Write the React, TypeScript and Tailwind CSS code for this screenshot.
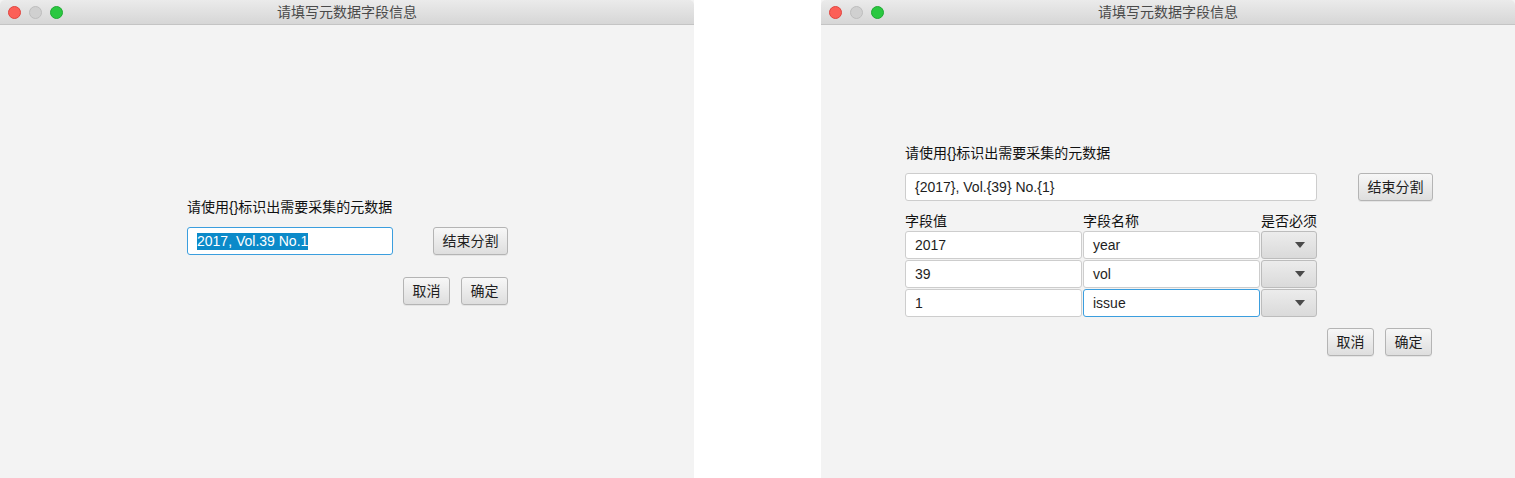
import React from "react";

const FONT = { fontFamily: '"Liberation Sans", "Noto Sans CJK SC", sans-serif' };

function TitleBar() {
  return (
    <div className="relative h-[25px] shrink-0 rounded-t-[5px] border-b border-[#c4c4c4] bg-gradient-to-b from-[#ebebeb] to-[#d6d6d6] flex items-center">
      <div className="flex items-center gap-[8px] pl-[8px]">
        <span className="block h-[13px] w-[13px] rounded-full bg-[#fc5f57] border border-[#e0443e]" />
        <span className="block h-[13px] w-[13px] rounded-full bg-[#d0d0d0] border border-[#bdbdbd]" />
        <span className="block h-[13px] w-[13px] rounded-full bg-[#2ac840] border border-[#1eaa32]" />
      </div>
      <div className="absolute inset-0 flex items-center justify-center text-[14px] text-[#4a4a4a]">
        请填写元数据字段信息
      </div>
    </div>
  );
}

function Btn({ children, w }: { children: React.ReactNode; w: string }) {
  return (
    <div
      className={`${w} h-[28px] flex items-center justify-center rounded-[3px] border border-[#b4b4b4] bg-gradient-to-b from-[#f7f7f7] to-[#dedede] text-[14px] text-[#1e1e1e] shadow-[0_1px_0_rgba(0,0,0,0.06)]`}
    >
      {children}
    </div>
  );
}

function Field({ children, focus, w }: { children: React.ReactNode; focus?: boolean; w: string }) {
  return (
    <div
      className={`${w} h-[28px] flex items-center rounded-[3px] bg-white text-[14px] text-[#1e1e1e] pl-[9px] ${
        focus ? "border-[1.5px] border-[#3b9ede]" : "border border-[#cdcdcd]"
      }`}
    >
      {children}
    </div>
  );
}

function Combo() {
  return (
    <div className="w-[56px] h-[28px] flex items-center justify-end pr-[11px] rounded-[3px] border border-[#bcbcbc] bg-gradient-to-b from-[#ececec] to-[#dadada]">
      <svg width="10" height="6" viewBox="0 0 10 6">
        <path d="M0 0 L10 0 L5 6 Z" fill="#4a4a4a" />
      </svg>
    </div>
  );
}

function LeftWindow() {
  return (
    <div className="w-[694px] h-[478px] flex flex-col bg-[#f3f3f3]">
      <TitleBar />
      <div className="pl-[187px] pt-[173px] flex flex-col">
        <div className="text-[14px] leading-[18px] text-[#111]">请使用{"{}"}标识出需要采集的元数据</div>
        <div className="mt-[11px] flex items-center gap-[40px]">
          <Field w="w-[206px]" focus>
            <span className="bg-[#0b8ac9] text-white leading-[17px]">2017, Vol.39 No.1</span>
          </Field>
          <Btn w="w-[75px]">结束分割</Btn>
        </div>
        <div className="mt-[22px] w-[321px] flex justify-end gap-[11px]">
          <Btn w="w-[47px]">取消</Btn>
          <Btn w="w-[47px]">确定</Btn>
        </div>
      </div>
    </div>
  );
}

function RightWindow() {
  const rows = [
    ["2017", "year", false],
    ["39", "vol", false],
    ["1", "issue", true],
  ] as const;
  return (
    <div className="w-[694px] h-[478px] flex flex-col bg-[#f3f3f3]">
      <TitleBar />
      <div className="pl-[84px] pt-[119px] flex flex-col">
        <div className="text-[14px] leading-[18px] text-[#111]">请使用{"{}"}标识出需要采集的元数据</div>
        <div className="mt-[11px] flex items-center gap-[41px]">
          <Field w="w-[412px]">{"{2017}, Vol.{39} No.{1}"}</Field>
          <Btn w="w-[75px]">结束分割</Btn>
        </div>
        <div className="mt-[11px] flex text-[14px] leading-[18px] text-[#111]">
          <div className="w-[178px]">字段值</div>
          <div className="w-[178px]">字段名称</div>
          <div>是否必须</div>
        </div>
        <div className="mt-[1px] flex flex-col gap-[1px]">
          {rows.map(([v, n, f]) => (
            <div key={v} className="flex gap-[1px]">
              <Field w="w-[177px]">{v}</Field>
              <Field w="w-[177px]" focus={f}>
                {n}
              </Field>
              <Combo />
            </div>
          ))}
        </div>
        <div className="mt-[11px] w-[527px] flex justify-end gap-[11px]">
          <Btn w="w-[47px]">取消</Btn>
          <Btn w="w-[47px]">确定</Btn>
        </div>
      </div>
    </div>
  );
}

export default function App() {
  return (
    <div className="w-[1515px] h-[478px] flex bg-white overflow-hidden" style={FONT}>
      <LeftWindow />
      <div className="w-[127px] shrink-0 bg-white" />
      <RightWindow />
    </div>
  );
}
